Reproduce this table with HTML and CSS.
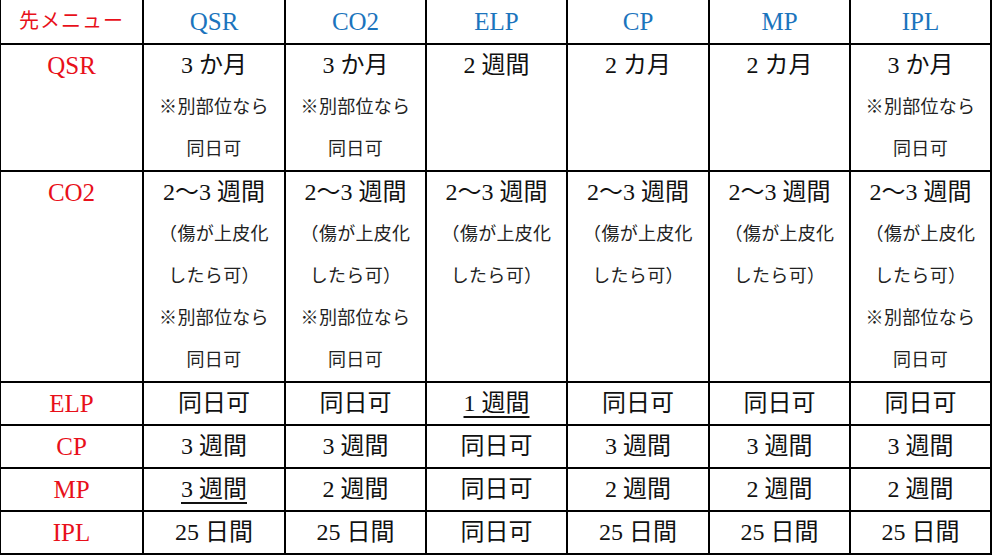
FILE: index.html
```html
<!DOCTYPE html>
<html lang="ja">
<head>
<meta charset="utf-8">
<title>施術間隔表</title>
<link rel="stylesheet" href="styles.css">
</head>
<body>
<table class="grid">
  <colgroup>
    <col class="c0"><col class="c1"><col class="c2"><col class="c3"><col class="c4"><col class="c5"><col class="c6">
  </colgroup>
  <thead>
    <tr class="head">
      <th class="corner">先メニュー</th>
      <th class="col-label">QSR</th>
      <th class="col-label">CO2</th>
      <th class="col-label">ELP</th>
      <th class="col-label">CP</th>
      <th class="col-label">MP</th>
      <th class="col-label">IPL</th>
    </tr>
  </thead>
  <tbody>
    <tr>
      <th class="row-label">QSR</th>
      <td><div class="main">3 か月</div><div class="note">※別部位なら</div><div class="note">同日可</div></td>
      <td><div class="main">3 か月</div><div class="note">※別部位なら</div><div class="note">同日可</div></td>
      <td><div class="main">2 週間</div></td>
      <td><div class="main">2 カ月</div></td>
      <td><div class="main">2 カ月</div></td>
      <td><div class="main">3 か月</div><div class="note">※別部位なら</div><div class="note">同日可</div></td>
    </tr>
    <tr>
      <th class="row-label">CO2</th>
      <td><div class="main">2〜3 週間</div><div class="note">（傷が上皮化</div><div class="note">したら可）</div><div class="note">※別部位なら</div><div class="note">同日可</div></td>
      <td><div class="main">2〜3 週間</div><div class="note">（傷が上皮化</div><div class="note">したら可）</div><div class="note">※別部位なら</div><div class="note">同日可</div></td>
      <td><div class="main">2〜3 週間</div><div class="note">（傷が上皮化</div><div class="note">したら可）</div></td>
      <td><div class="main">2〜3 週間</div><div class="note">（傷が上皮化</div><div class="note">したら可）</div></td>
      <td><div class="main">2〜3 週間</div><div class="note">（傷が上皮化</div><div class="note">したら可）</div></td>
      <td><div class="main">2〜3 週間</div><div class="note">（傷が上皮化</div><div class="note">したら可）</div><div class="note">※別部位なら</div><div class="note">同日可</div></td>
    </tr>
    <tr>
      <th class="row-label">ELP</th>
      <td><div class="main">同日可</div></td>
      <td><div class="main">同日可</div></td>
      <td><div class="main"><span class="ul">1 週間</span></div></td>
      <td><div class="main">同日可</div></td>
      <td><div class="main">同日可</div></td>
      <td><div class="main">同日可</div></td>
    </tr>
    <tr>
      <th class="row-label">CP</th>
      <td><div class="main">3 週間</div></td>
      <td><div class="main">3 週間</div></td>
      <td><div class="main">同日可</div></td>
      <td><div class="main">3 週間</div></td>
      <td><div class="main">3 週間</div></td>
      <td><div class="main">3 週間</div></td>
    </tr>
    <tr>
      <th class="row-label">MP</th>
      <td><div class="main"><span class="ul">3 週間</span></div></td>
      <td><div class="main">2 週間</div></td>
      <td><div class="main">同日可</div></td>
      <td><div class="main">2 週間</div></td>
      <td><div class="main">2 週間</div></td>
      <td><div class="main">2 週間</div></td>
    </tr>
    <tr>
      <th class="row-label">IPL</th>
      <td><div class="main">25 日間</div></td>
      <td><div class="main">25 日間</div></td>
      <td><div class="main">同日可</div></td>
      <td><div class="main">25 日間</div></td>
      <td><div class="main">25 日間</div></td>
      <td><div class="main">25 日間</div></td>
    </tr>
  </tbody>
</table>
</body>
</html>
```

FILE: styles.css
```css
html, body {
  margin: 0;
  padding: 0;
  background: #ffffff;
}

body {
  font-family: "Liberation Serif", "Noto Sans CJK JP", serif;
  color: #111111;
}

.grid {
  border-collapse: collapse;
  table-layout: fixed;
  width: 993px;
  margin: -2px 0 0 -1px;
}

.c0 { width: 143px; }
.c1 { width: 142px; }
.c2 { width: 141px; }
.c3 { width: 141px; }
.c4 { width: 142px; }
.c5 { width: 141px; }
.c6 { width: 141px; }

.grid th,
.grid td {
  border: 2px solid #000000;
  padding: 0;
  text-align: center;
  vertical-align: top;
  font-weight: normal;
}

.head th {
  height: 43px;
  line-height: 43px;
  vertical-align: middle;
}

.corner {
  color: #e8101a;
  font-size: 20px;
  letter-spacing: 1px;
}

.col-label {
  color: #1b74bd;
  font-size: 25px;
}

.row-label {
  color: #e8101a;
  font-size: 25px;
  line-height: 41px;
}

.main {
  font-size: 24px;
  line-height: 41px;
  white-space: nowrap;
}

.note {
  font-size: 18px;
  line-height: 42px;
  letter-spacing: 0.3px;
  white-space: nowrap;
  color: #222222;
}

.ul {
  text-decoration: underline;
  text-decoration-thickness: 2px;
  text-underline-offset: 5px;
}
```
